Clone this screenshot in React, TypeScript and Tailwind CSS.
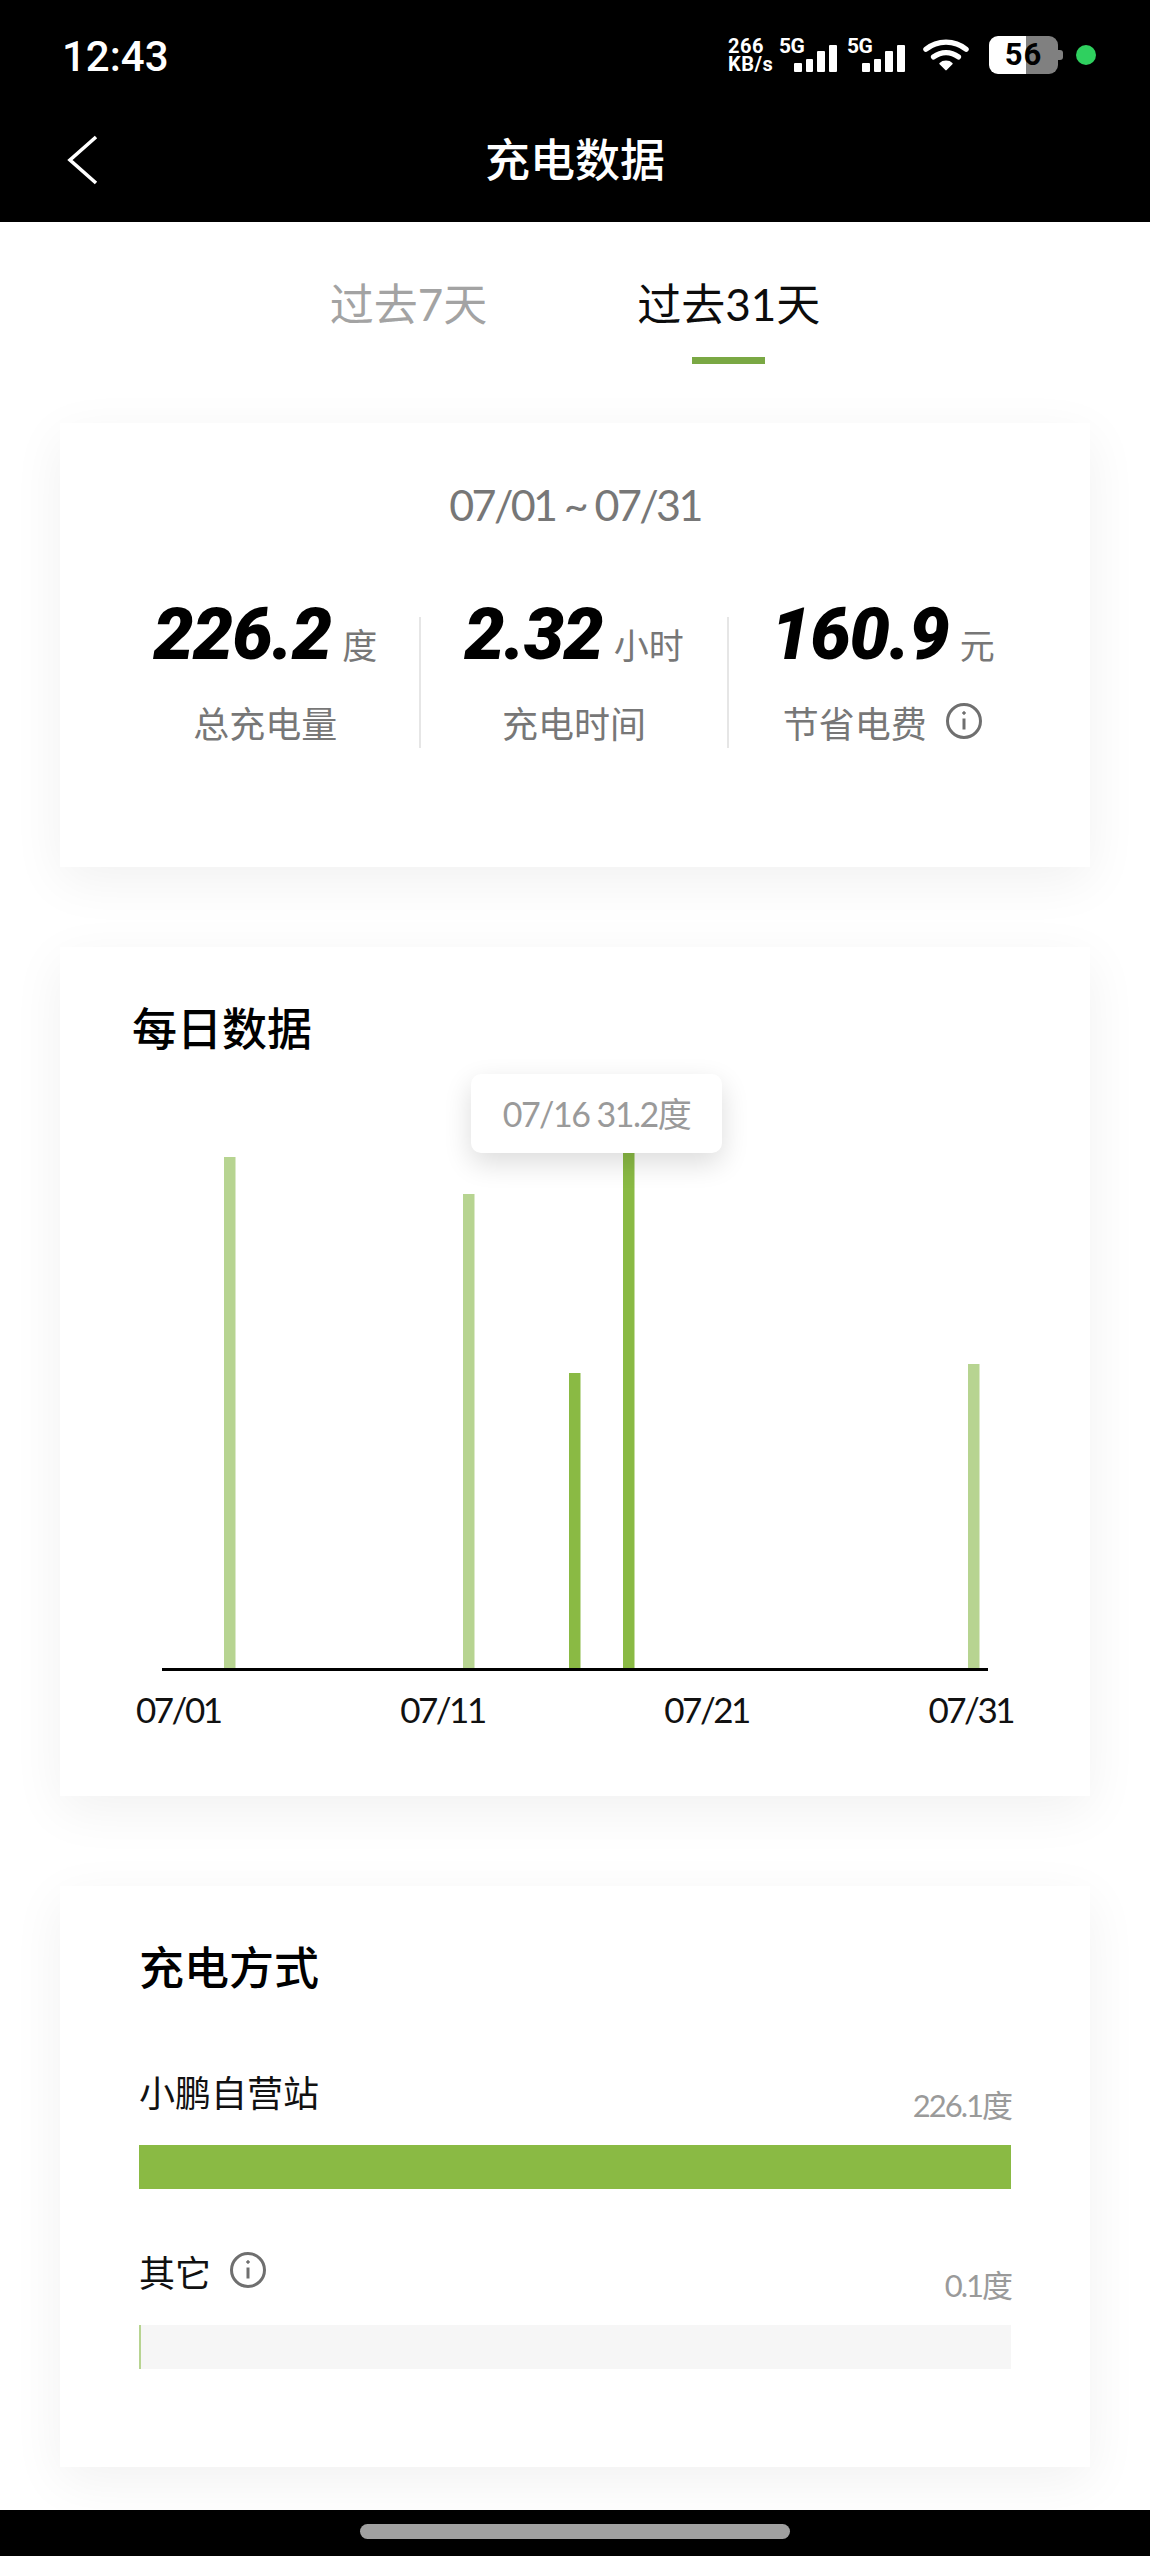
import React from 'react';

const bars = [
  { x: 62, top: 1157, color: '#b7d491' },
  { x: 301, top: 1194, color: '#b7d491' },
  { x: 407, top: 1373, color: '#8aba44' },
  { x: 461, top: 1150, color: '#8aba44' },
  { x: 806, top: 1364, color: '#b7d491' },
];

function InfoIcon({ size }: { size: number }) {
  return (
    <svg className="-mt-[6px]" width={size} height={size} viewBox="0 0 38 38" fill="none" stroke="#6f6f6f" strokeWidth="3">
      <circle cx="19" cy="19" r="16.5" />
      <path d="M19 16.5v11" />
      <circle cx="19" cy="11" r="1.3" fill="#6f6f6f" strokeWidth="1" />
    </svg>
  );
}

function Signal() {
  return (
    <div className="relative flex h-[34px] w-[58px] items-end justify-end gap-[4px]">
      <span className="absolute left-0 top-0 text-[21px] leading-[16px] font-bold tracking-[-0.5px] font-['Roboto']">5G</span>
      <div className="h-[9px] w-[8px] rounded-[1px] bg-white" />
      <div className="h-[13px] w-[7px] rounded-[1px] bg-white" />
      <div className="h-[21px] w-[8px] rounded-[1px] bg-white" />
      <div className="h-[27px] w-[8px] rounded-[1px] bg-white" />
    </div>
  );
}

function StatusBar() {
  return (
    <div className="flex h-[112px] items-start justify-between pl-[62px] pr-[54px] pt-[33px] text-white font-['Roboto']">
      <span className="text-[42px] leading-[48px] font-medium">12:43</span>
      <div className="flex items-center pt-[3px]">
        <div className="mr-[3px] flex w-[48px] flex-col text-[20px] leading-[18px] font-bold tracking-[0.5px]">
          <span>266</span>
          <span>KB/s</span>
        </div>
        <Signal />
        <div className="ml-[10px]">
          <Signal />
        </div>
        <svg className="ml-[18px]" width="46" height="34" viewBox="0 0 48 34" fill="none" stroke="#fff" strokeWidth="5.5" strokeLinecap="round">
          <path d="M3 11C15 1 33 1 45 11" />
          <path d="M11 19c8-6 18-6 26 0" />
          <path d="M24 32l-6-6c3-3 9-3 12 0z" fill="#fff" strokeWidth="2" strokeLinejoin="round" />
        </svg>
        <div className="ml-[20px] flex items-center">
          <div className="flex h-[38px] w-[69px] items-center justify-center rounded-[9px] bg-[linear-gradient(90deg,#fff_54%,#808080_54%)] text-[31px] font-bold tracking-[1px] text-black">
            56
          </div>
          <div className="h-[10px] w-[5px] rounded-r-[3px] bg-[#808080]" />
        </div>
        <div className="ml-[13px] h-[20px] w-[20px] rounded-full bg-[#2fd05f]" />
      </div>
    </div>
  );
}

function NavBar() {
  return (
    <div className="relative flex h-[110px] items-start justify-center pt-[20px] text-white">
      <svg className="absolute left-[66px] top-[23px]" width="33" height="50" viewBox="0 0 33 50" fill="none" stroke="#fff" strokeWidth="3.6">
        <path d="M30 2L4 25l26 23" />
      </svg>
      <span className="text-[45px] leading-[56px] font-medium">充电数据</span>
    </div>
  );
}

function Tabs() {
  return (
    <div className="flex h-[201px] justify-center gap-[150px] pt-[52px] text-[44px] leading-[60px]">
      <div className="text-[#a3a3a3]">过去7天</div>
      <div className="flex flex-col items-center text-[#0c0c0c]">
        <span>过去31天</span>
        <div className="mt-[23px] h-[7px] w-[73px] bg-[#7aa844]" />
      </div>
    </div>
  );
}

function Stat({ value, unit, label, info }: { value: string; unit: string; label: string; info?: boolean }) {
  return (
    <div className="flex flex-1 flex-col items-center">
      <div className="flex items-baseline gap-[11px]">
        <span className="text-[72px] leading-[80px] font-black italic tracking-[-1px] text-black font-['Roboto']">{value}</span>
        <span className="text-[35px] leading-[40px] text-[#777777]">{unit}</span>
      </div>
      <div className="mt-[25px] flex items-center gap-[18px] text-[36px] leading-[48px] text-[#777777]">
        <span>{label}</span>
        {info && <InfoIcon size={38} />}
      </div>
    </div>
  );
}

function Divider() {
  return <div className="mt-[22px] h-[131px] w-[2px] shrink-0 bg-[#e6e6e6]" />;
}

function SummaryCard() {
  return (
    <section className="mx-[60px] h-[444px] bg-white shadow-[0_14px_50px_rgba(0,0,0,0.06)]">
      <div className="pt-[52px] text-center text-[43px] leading-[60px] tracking-[-2.6px] text-[#777777]">07/01 ~ 07/31</div>
      <div className="mt-[60px] flex pl-[52px] pr-[54px]">
        <Stat value="226.2" unit="度" label="总充电量" />
        <Divider />
        <Stat value="2.32" unit="小时" label="充电时间" />
        <Divider />
        <Stat value="160.9" unit="元" label="节省电费" info />
      </div>
    </section>
  );
}

function DailyCard() {
  return (
    <section className="relative mx-[60px] mt-[80px] h-[849px] bg-white shadow-[0_14px_50px_rgba(0,0,0,0.06)]">
      <h2 className="pl-[72px] pt-[52px] text-[45px] leading-[60px] font-medium text-black">每日数据</h2>
      <svg className="mt-[38px] block" width="1031" height="574" viewBox="0 1097 1031 574">
        {bars.map((b) => (
          <rect key={b.x} x={b.x + 102} y={b.top} width="11.5" height={1668 - b.top} fill={b.color} />
        ))}
        <rect x="102" y="1668" width="826" height="3" fill="#000" />
      </svg>
      <div className="mt-[16px] flex justify-between pl-[76px] pr-[77px] text-[35px] leading-[44px] tracking-[-2.5px] text-[#111111]">
        <span>07/01</span>
        <span>07/11</span>
        <span>07/21</span>
        <span>07/31</span>
      </div>
      <div className="absolute left-[411px] top-[127px] flex h-[79px] w-[251px] items-center justify-center rounded-[10px] bg-white text-[34px] tracking-[-1.5px] text-[#9a9a9a] shadow-[0_10px_28px_rgba(0,0,0,0.14)]">
        07/16 31.2度
      </div>
    </section>
  );
}

function MethodRow({ label, value, pct, color, info }: { label: string; value: string; pct: string; color: string; info?: boolean }) {
  return (
    <div>
      <div className="flex h-[56px] items-start justify-between">
        <div className="flex items-center gap-[18px] text-[36px] leading-[48px] text-[#111111]">
          <span>{label}</span>
          {info && <InfoIcon size={38} />}
        </div>
        <span className="mt-[16px] text-[31px] leading-[40px] tracking-[-2px] text-[#9a9a9a]">{value}</span>
      </div>
      <div className="mt-[20px] h-[44px] bg-[#f6f6f6]">
        <div className="h-full" style={{ width: pct, background: color }} />
      </div>
    </div>
  );
}

function MethodCard() {
  return (
    <section className="mx-[60px] mt-[90px] h-[581px] bg-white px-[79px] shadow-[0_14px_50px_rgba(0,0,0,0.06)]">
      <h2 className="pt-[52px] text-[45px] leading-[60px] font-medium text-black">充电方式</h2>
      <div className="mt-[71px] flex flex-col gap-[60px]">
        <MethodRow label="小鹏自营站" value="226.1度" pct="100%" color="#8aba44" />
        <MethodRow label="其它" value="0.1度" pct="2px" color="#b7d491" info />
      </div>
    </section>
  );
}

export default function App() {
  return (
    <div className="flex h-[2556px] w-[1150px] flex-col overflow-hidden bg-white font-[Lato,'Noto_Sans_CJK_SC',sans-serif]">
      <header className="h-[222px] shrink-0 bg-black">
        <StatusBar />
        <NavBar />
      </header>
      <main className="flex-1">
        <Tabs />
        <SummaryCard />
        <DailyCard />
        <MethodCard />
      </main>
      <footer className="flex h-[46px] shrink-0 items-start justify-center bg-black pt-[14px]">
        <div className="h-[15px] w-[430px] rounded-full bg-[#a0a0a0]" />
      </footer>
    </div>
  );
}
